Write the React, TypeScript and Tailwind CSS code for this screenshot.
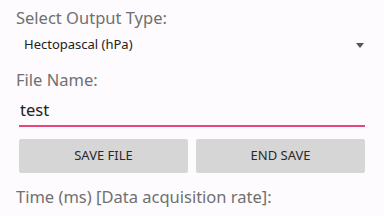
export default function App() {
  return (
    <div
      className="flex h-[216px] w-[384px] flex-col overflow-hidden bg-[#fdfbfd] text-[#707070]"
      style={{ fontFamily: '"Noto Sans", "Open Sans", sans-serif' }}
    >
      <div className="pl-4 pt-[8px] text-[16.5px] leading-[20px]">Select Output Type:</div>
      <div className="flex items-center pl-6 pr-[20px] pt-[7px] text-[13px] leading-[18px] text-[#222]">
        <span className="flex-1">Hectopascal (hPa)</span>
        <svg width="8" height="5" viewBox="0 0 8 5" className="mt-[2px]">
          <path d="M0 0h8L4 5z" fill="#555" />
        </svg>
      </div>
      <div className="pl-4 pt-[17px] text-[16.5px] leading-[20px]">File Name:</div>
      <div className="mx-[19px] mt-[9px] border-b-2 border-[#e8457a] pb-[4px] pl-[1px] text-[16.5px] leading-[22px] text-[#222]">
        test
      </div>
      <div className="mx-[19px] mt-[12px] flex gap-[8px]">
        <button className="h-[34px] flex-1 rounded-[2px] bg-[#d6d6d7] text-[13px] text-[#2a2a2a]">
          SAVE FILE
        </button>
        <button className="h-[34px] flex-1 rounded-[2px] bg-[#d6d6d7] text-[13px] text-[#2a2a2a]">
          END SAVE
        </button>
      </div>
      <div className="pl-4 pt-[14px] text-[16.5px] leading-[20px]">Time (ms) [Data acquisition rate]:</div>
    </div>
  );
}
